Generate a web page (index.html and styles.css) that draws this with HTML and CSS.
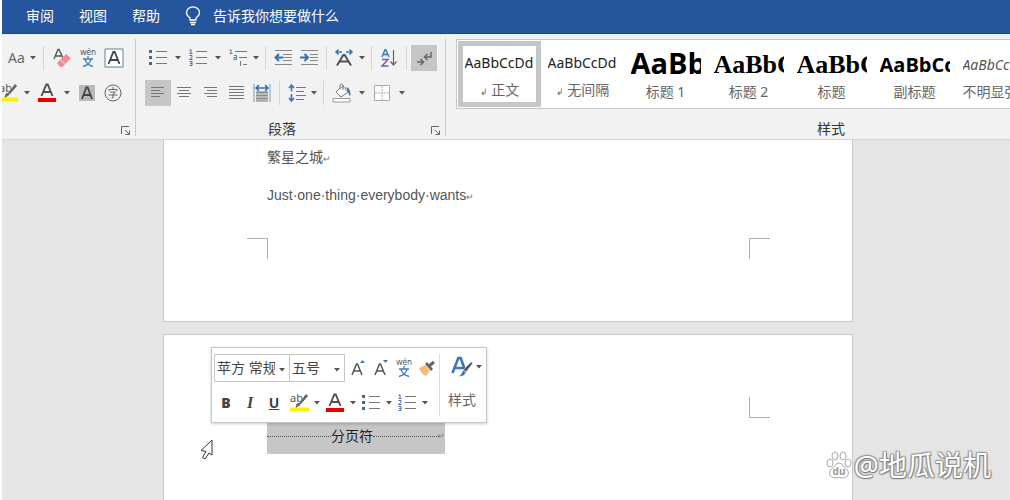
FILE: index.html
```html
<!DOCTYPE html>
<html lang="zh-CN">
<head>
<meta charset="utf-8">
<title>文档</title>
<link rel="stylesheet" href="styles.css">
</head>
<body>
<svg class="defs" aria-hidden="true">
  <symbol id="caret" viewBox="0 0 6 4"><path d="M0 0h6L3 3.5z" fill="#555"/></symbol>
  <symbol id="launch" viewBox="0 0 10 10"><path d="M.5 8V.5H8M4 4l4 4M8.500 4.500v4h-4" fill="none" stroke="#666"/></symbol>
  <symbol id="bullets" viewBox="0 0 18 18"><path d="M7 2.500h11M7 8.500h11M7 14.500h11" stroke="#777"/><path d="M0 1h3v3H0zM0 7h3v3H0zM0 13h3v3H0z" fill="#3f6797"/></symbol>
  <symbol id="numbers" viewBox="0 0 18 18"><path d="M7 2.500h11M7 8.500h11M7 14.500h11" stroke="#777"/><path d="M.5 1.500L2 .5v4M.5 4.500h3M.5 6.500h2.500v2L.5 10.500h3M.5 12.500h2.500v4H.5M1 14.500h2" fill="none" stroke="#4a70a0"/></symbol>
  <symbol id="wen" viewBox="0 0 18 20"><path d="M9 8v2.500M4 11h10M6 11.500c1 3 4 6 8 7M12 11.500c-1 3-4 6-8 7" fill="none" stroke="#3f7fc0" stroke-width="1.300"/></symbol>
  <symbol id="highlight" viewBox="0 0 20 20"><path d="M18.500 3L11 11.500l-4 3 1-3.500 3-1L17 1.500z" fill="#666" stroke="#666"/><path d="M1 14.500h19v4H1z" fill="#fff000"/></symbol>
  <symbol id="fontcolor" viewBox="0 0 20 20"><path d="M4.500 13L9.300 1.500h1.400L15.500 13M6.500 9h7" fill="none" stroke="#505050" stroke-width="1.900"/><path d="M1 15h18v4H1z" fill="#e80000"/></symbol>
</svg>

<div class="app">
  <nav class="tabs">
    <button>审阅</button>
    <button>视图</button>
    <button>帮助</button>
    <label class="tell">
      <svg width="16" height="20" viewBox="0 0 16 20"><path d="M5 14v-2C3 10.500 1.500 9 1.500 6.800a6.500 6 0 0 1 13 0C14.500 9 13 10.500 11 12v2zM5 16.500h6M6 18.500h4" fill="none" stroke="#fff" stroke-width="1.300"/></svg>
      <input type="text" placeholder="告诉我你想要做什么" aria-label="告诉我你想要做什么">
    </label>
  </nav>

  <header class="ribbon">
    <section class="group font-group">
      <div class="row">
        <button class="btn aa">Aa</button>
        <button class="drop small"><svg><use href="#caret"/></svg></button>
        <i class="sep wide"></i>
        <button class="btn"><svg width="20" height="20" viewBox="0 0 20 20"><path d="M2 11L6 1.500h1L11 10M3.500 8h6" fill="none" stroke="#555" stroke-width="1.400"/><path d="M5 15l9-9 5 4-8.500 9H8z" fill="#ef8f99"/><path d="M8.500 11.500l4.500 5" stroke="#fbdde0"/></svg></button>
        <button class="btn"><svg width="18" height="20"><text x="9" y="7" text-anchor="middle" class="pinyin">wén</text><use href="#wen"/></svg></button>
        <button class="btn"><svg width="20" height="20" viewBox="0 0 20 20"><path d="M1 1h18v18H1z" fill="#fff" stroke="#5b8299"/><path d="M4.500 16L9.300 4h1.400l4.800 12M6.500 12h7" fill="none" stroke="#444" stroke-width="1.800"/></svg></button>
      </div>
      <div class="row">
        <button class="btn cut"><svg width="20" height="20"><text x="1" y="9" class="ab">ab</text><use href="#highlight"/></svg></button>
        <button class="drop"><svg><use href="#caret"/></svg></button>
        <button class="btn"><svg width="20" height="20"><use href="#fontcolor"/></svg></button>
        <button class="drop"><svg><use href="#caret"/></svg></button>
        <button class="btn"><svg width="16" height="16" viewBox="0 0 16 16"><path d="M0 0h16v16H0z" fill="#b9b9b9"/><path d="M3 14L7.300 2.500h1.400L13 14M5 10h6" fill="none" stroke="#444" stroke-width="1.800"/></svg></button>
        <button class="btn"><svg width="18" height="18" viewBox="0 0 18 18"><circle cx="9" cy="9" r="8" fill="none" stroke="#666"/><path d="M9 3v2M5 7V5.500h8V7M6 8h5.500L9 10v4H7.500M4.500 11h9" fill="none" stroke="#666"/></svg></button>
      </div>
      <footer><span></span><button class="launcher"><svg><use href="#launch"/></svg></button></footer>
    </section>

    <section class="group para-group">
      <div class="row">
        <button class="btn"><svg width="18" height="18"><use href="#bullets"/></svg></button>
        <button class="drop"><svg><use href="#caret"/></svg></button>
        <button class="btn"><svg width="18" height="18"><use href="#numbers"/></svg></button>
        <button class="drop"><svg><use href="#caret"/></svg></button>
        <button class="btn"><svg width="18" height="18" viewBox="0 0 18 18"><path d="M6 2.500h12M10 8.500h8M14 15.500h4" stroke="#777"/><path d="M.5 1.500L2 .5v4M.5 4.500h3M5 6.500h2.500v4H5v-2h2M11.500 12v5M11 13.500h1" fill="none" stroke="#4a80b8"/></svg></button>
        <button class="drop small"><svg><use href="#caret"/></svg></button>
        <i class="sep"></i>
        <button class="btn"><svg width="18" height="18" viewBox="0 0 18 18"><path d="M1 1.500h17M9 5.500h9M9 8.500h9M9 11.500h9M1 15.500h17" stroke="#888"/><path d="M9 8.500H2M5 5L1.500 8.500 5 12" fill="none" stroke="#2f73b5" stroke-width="2"/></svg></button>
        <button class="btn"><svg width="18" height="18" viewBox="0 0 18 18"><path d="M1 1.500h17M10 5.500h8M10 8.500h8M10 11.500h8M1 15.500h17" stroke="#888"/><path d="M0 8.500h7M4.500 5L8 8.500 4.500 12" fill="none" stroke="#2f73b5" stroke-width="2"/></svg></button>
        <i class="sep"></i>
        <button class="btn"><svg width="20" height="18" viewBox="0 0 20 18"><path d="M3 16.500L9.300 6h1.400L17 16.500M6 12.500h8" fill="none" stroke="#555" stroke-width="2"/><path d="M8 3H2M4.500.5L2 3l2.500 2.500M12 3h6M15.500.5L18 3l-2.500 2.500" fill="none" stroke="#3978b8" stroke-width="1.500"/></svg></button>
        <button class="drop small"><svg><use href="#caret"/></svg></button>
        <i class="sep"></i>
        <button class="btn"><svg width="18" height="18" viewBox="0 0 18 18"><path d="M2 8L5 .8h.8L9 8M3 5.500h5" fill="none" stroke="#3978b8" stroke-width="1.400"/><path d="M2 10.500h6L2 17h6.500" fill="none" stroke="#8753a5" stroke-width="1.400"/><path d="M13.500 1v15M10.500 12.500l3 3.500 3-3.500" fill="none" stroke="#666" stroke-width="1.200"/></svg></button>
        <i class="sep"></i>
        <button class="btn on"><svg width="18" height="18" viewBox="0 0 18 18"><path d="M16 3v5h-6M12.500 5L9.500 8l3 3M2 13h6M5.500 10l3 3-3 3" fill="none" stroke="#666" stroke-width="1.500"/></svg></button>
      </div>
      <div class="row">
        <button class="btn on"><svg width="16" height="16" viewBox="0 0 16 16"><path d="M1 2.500h13M1 5.500h9M1 8.500h13M1 11.500h9" stroke="#777"/></svg></button>
        <button class="btn"><svg width="16" height="16" viewBox="0 0 16 16"><path d="M1 2.500h14M3 5.500h10M1 8.500h14M3 11.500h10" stroke="#777"/></svg></button>
        <button class="btn"><svg width="16" height="16" viewBox="0 0 16 16"><path d="M2 2.500h13M5 5.500h10M2 8.500h13M5 11.500h10" stroke="#777"/></svg></button>
        <button class="btn"><svg width="16" height="16" viewBox="0 0 16 16"><path d="M1 1.500h15M1 4.500h15M1 7.500h15M1 10.500h15M1 13.500h15" stroke="#777"/></svg></button>
        <button class="btn"><svg width="18" height="18" viewBox="0 0 18 18"><path d="M1 0v18M17 0v18" stroke="#6f9cc6"/><path d="M3 7h12v10H3z" fill="#bbb"/><path d="M3 8.500h12M3 11.500h12M3 14.500h12M3 17h12" stroke="#888"/><path d="M3 4h12M6 1L3 4l3 3M12 1l3 3-3 3" fill="none" stroke="#2f6ead" stroke-width="1.500"/></svg></button>
        <i class="sep"></i>
        <button class="btn"><svg width="18" height="18" viewBox="0 0 18 18"><path d="M8 3.500h10M8 7.500h8M8 11.500h10M8 15.500h8" stroke="#777"/><path d="M3.500 1v6.500M1 4l2.500-3L6 4M3.500 10v7M1 14l2.500 3L6 14" fill="none" stroke="#3978b8" stroke-width="1.600"/></svg></button>
        <button class="drop tiny"><svg><use href="#caret"/></svg></button>
        <i class="sep wide"></i>
        <button class="btn"><svg width="20" height="20" viewBox="0 0 20 20"><path d="M1 15.500h17v3.500H1z" fill="#fff" stroke="#999"/><path d="M4 9l7-6 5 6-7 5zM8 6V2q1.500-2 3 0v5" fill="#fff" stroke="#777"/><path d="M14 4q5 1 4.500 9-2-1-2.500-4z" fill="#3978a8"/></svg></button>
        <button class="drop"><svg><use href="#caret"/></svg></button>
        <button class="btn"><svg width="18" height="18" viewBox="0 0 18 18"><path d="M1.500 1.500h15v15h-15z" fill="#fff" stroke="#aaa"/><path d="M9 2v14M2 9h14" stroke="#aaa" stroke-dasharray="2 1"/></svg></button>
        <button class="drop"><svg><use href="#caret"/></svg></button>
      </div>
      <footer><span>段落</span><button class="launcher"><svg><use href="#launch"/></svg></button></footer>
    </section>

    <section class="group style-group">
      <div class="gallery">
        <button class="style chosen"><span class="sample">AaBbCcDd</span><span class="name"><small>↲</small> 正文</span></button>
        <button class="style"><span class="sample">AaBbCcDd</span><span class="name"><small>↲</small> 无间隔</span></button>
        <button class="style"><span class="sample h1">AaBb</span><span class="name">标题 1</span></button>
        <button class="style"><span class="sample serif">AaBbC</span><span class="name">标题 2</span></button>
        <button class="style"><span class="sample serif">AaBbC</span><span class="name">标题</span></button>
        <button class="style"><span class="sample sub">AaBbCc</span><span class="name">副标题</span></button>
        <button class="style"><span class="sample faint">AaBbCcDd</span><span class="name">不明显强调</span></button>
      </div>
      <footer><span>样式</span></footer>
    </section>
  </header>

  <main class="canvas">
    <article class="sheet first">
      <div class="body">
        <p>繁星之城<small>↵</small></p>
        <p class="latin">Just·one·thing·everybody·wants<small>↵</small></p>
      </div>
      <div class="corners bottom"><i></i><i></i></div>
    </article>

    <article class="sheet second">
      <div class="corners top"><i></i><i></i></div>
      <div class="body">
        <p class="break"><i></i><span>分页符</span><i></i><small>↵</small></p>
      </div>

      <div class="mini">
        <div class="mini-tools">
          <div class="row">
            <span class="combo family"><select aria-label="字体"><option>苹方 常规</option></select><svg><use href="#caret"/></svg></span>
            <span class="combo size"><select aria-label="字号"><option>五号</option></select><svg><use href="#caret"/></svg></span>
            <button class="btn slim"><svg width="16" height="18" viewBox="0 0 16 18"><path d="M2 16L6.500 5h1L12 16M4 12h6" fill="none" stroke="#555" stroke-width="1.500"/><path d="M10 4l2.500-3L15 4z" fill="#3978b8"/></svg></button>
            <button class="btn slim"><svg width="16" height="18" viewBox="0 0 16 18"><path d="M2 16L6.500 5h1L12 16M4 12h6" fill="none" stroke="#555" stroke-width="1.500"/><path d="M10 1l2.500 3L15 1z" fill="#3978b8"/></svg></button>
            <button class="btn slim"><svg width="18" height="20"><text x="9" y="7" text-anchor="middle" class="pinyin">wén</text><use href="#wen"/></svg></button>
            <button class="btn slim"><svg width="18" height="18" viewBox="0 0 18 18"><path d="M1 9l6-3 5 6-4 5q-5-2-7-8z" fill="#f0bd7c"/><path d="M7 5l2-2 6 7-2 2z" fill="#666"/><path d="M11 7l5-4" stroke="#666" stroke-width="3"/></svg></button>
          </div>
          <div class="row">
            <button class="btn mark"><b>B</b></button>
            <button class="btn mark italic">I</button>
            <button class="btn mark"><u>U</u></button>
            <button class="btn"><svg width="20" height="20"><text x="1" y="9" class="ab">ab</text><use href="#highlight"/></svg></button>
            <button class="drop small"><svg><use href="#caret"/></svg></button>
            <button class="btn"><svg width="20" height="20"><use href="#fontcolor"/></svg></button>
            <button class="drop small"><svg><use href="#caret"/></svg></button>
            <button class="btn"><svg width="18" height="18"><use href="#bullets"/></svg></button>
            <button class="drop small"><svg><use href="#caret"/></svg></button>
            <button class="btn"><svg width="18" height="18"><use href="#numbers"/></svg></button>
            <button class="drop small"><svg><use href="#caret"/></svg></button>
          </div>
        </div>
        <button class="mini-style">
          <span><svg width="24" height="22" viewBox="0 0 24 22"><path d="M2.500 17L8.300 2h2.400l5 14M5 12h9" fill="none" stroke="#3978b8" stroke-width="2.600"/><path d="M23 7l-7 9-3-2 8-8z" fill="#555" stroke="#fff" stroke-width=".5"/><path d="M13 14l3 2q-1 5-8 4.500 3-1 5-6.500z" fill="#3978b8" stroke="#fff" stroke-width=".6"/></svg><svg class="caret"><use href="#caret"/></svg></span>
          <span>样式</span>
        </button>
      </div>

      <svg class="pointer" width="14" height="22" viewBox="0 0 14 22"><path d="M12 1v15l-3-2-4 6-2.500-1.500L6 12.500 1 11.500z" fill="#fff" stroke="#333"/></svg>
    </article>

    <div class="watermark">
      <svg width="26" height="28" viewBox="0 0 26 28"><g fill="#fff" stroke="#aaa"><ellipse cx="4" cy="12" rx="3" ry="4"/><ellipse cx="9" cy="5" rx="3" ry="4"/><ellipse cx="17" cy="5" rx="3" ry="4"/><ellipse cx="22" cy="12" rx="3" ry="4"/><path d="M13 12q3 0 5 4 6 4 4 8-2 4-9 2.500Q6 28 4 24t4-8q2-4 5-4z"/></g><text x="13" y="24" text-anchor="middle" class="du">du</text></svg>
      <span>@地瓜说机</span>
    </div>
  </main>
</div>
</body>
</html>
```
FILE: styles.css
```css
* { box-sizing: border-box; }

body {
  margin: 0;
  background: #fff;
  color: #444;
  font: 14px/20px "Noto Sans", "Noto Sans CJK SC", sans-serif;
}

button, input, select {
  margin: 0;
  padding: 0;
  border: 0;
  background: none;
  color: inherit;
  font: inherit;
}

svg { display: block; flex: none; }
p { margin: 0; }
.defs { position: absolute; width: 0; height: 0; }

.app {
  display: flex;
  flex-direction: column;
  height: 100vh;
  margin-left: 2px;
  overflow: hidden;
}

/* Tab strip */
.tabs {
  display: flex;
  align-items: center;
  gap: 25px;
  height: 34px;
  padding: 0 24px 2px;
  background: #24559d;
  border-bottom: 1px solid #1d4680;
  color: #fff;
}
.tell { display: flex; align-items: center; flex: 1; gap: 12px; }
.tell input { flex: 1; }
.tell input::placeholder { color: #fff; opacity: 1; }

/* Ribbon */
.ribbon {
  display: flex;
  height: 106px;
  padding-top: 4px;
  background: #f2f2f2;
  border-top: 1px solid #e4f3fa;
  border-bottom: 1px solid #d4d4d4;
}
.group { display: flex; flex-direction: column; flex: none; }
.font-group, .para-group {
  gap: 9px;
  padding-top: 6px;
  margin-bottom: 3px;
  border-right: 1px solid #c9c9c9;
}
.font-group { width: 134px; }
.para-group { width: 310px; padding-left: 9px; }
.style-group { flex: 1; min-width: 0; padding-left: 10px; }

.row { display: flex; align-items: center; height: 26px; }
.btn {
  display: flex;
  align-items: center;
  justify-content: center;
  flex: none;
  width: 26px;
  height: 26px;
}
.on { background: #c6c6c6; }
.aa { padding-left: 3px; color: #666; }
.cut { width: 18px; justify-content: flex-end; padding-right: 2px; overflow: hidden; }
.slim { width: 23px; }
.drop { display: flex; align-items: center; justify-content: center; flex: none; width: 14px; height: 26px; }
.drop.small { width: 10px; }
.drop.tiny { width: 8px; }
.drop svg, .combo svg, .caret { width: 6px; height: 4px; }
.sep { flex: none; width: 9px; height: 24px; background: linear-gradient(#d6d6d6, #d6d6d6) center / 1px 100% no-repeat; }
.sep.wide { width: 11px; }

.pinyin { font: 8px "Noto Sans", sans-serif; fill: #555; }
.ab { font: 11px "Noto Sans", sans-serif; fill: #555; }

footer { display: flex; align-items: center; height: 20px; margin-top: auto; color: #333; }
.group footer span { flex: 1; text-align: center; }
.launcher { padding: 4px 4px 0 0; }
.font-group footer, .para-group footer { margin-bottom: -3px; }
.para-group footer { margin-left: -12px; }
.launcher svg { width: 10px; height: 10px; }

/* Style gallery */
.gallery {
  display: flex;
  height: 70px;
  padding: 1px;
  overflow: hidden;
  background: #fff;
  border: 1px solid #c6c6c6;
  border-right: 0;
}
.style {
  display: flex;
  flex-direction: column;
  align-items: center;
  justify-content: flex-end;
  flex: none;
  width: 83px;
  padding-bottom: 5px;
  color: #666;
}
.chosen { padding-bottom: 0; border: 5px solid #c6c6c6; }
.sample {
  width: 70px;
  overflow: hidden;
  color: #222;
  font-size: 14px;
  line-height: 34px;
  text-align: left;
  white-space: nowrap;
}
.name { white-space: nowrap; }
.name small { font-size: 9px; }
.h1 { font: bold 29px/38px "Open Sans", sans-serif; color: #000; }
.serif { font: bold 26px/34px "Liberation Serif", serif; color: #000; }
.sub { font: bold 20px/34px "Open Sans", sans-serif; color: #000; }
.faint { font-style: italic; color: #555; }
.style-group footer { padding-left: 196px; }

/* Document */
.canvas {
  position: relative;
  display: flex;
  flex-direction: column;
  flex: 1;
  gap: 12px;
  min-height: 0;
  padding: 0 157px 0 161px;
  overflow: hidden;
  background: #e5e5e5;
}
.sheet { position: relative; background: #fff; border: 1px solid #c9c9c9; }
.first { flex: none; padding: 2px 0 62px; border-top: 0; }
.second { flex: 1; padding-top: 62px; border-bottom: 0; }
.body { padding: 0 103px; }
.first p { padding: 5px 0; margin-bottom: 6px; color: #555; }
.body small { color: #777; font-size: 9px; }
.first .latin { font-family: "Liberation Sans", sans-serif; }
.corners { display: flex; justify-content: space-between; padding: 0 82px 0 83px; }
.corners i { width: 21px; height: 21px; border: 0 solid #b0b0b0; }
.bottom { padding-top: 20px; }
.bottom i { border-top-width: 1px; }
.top i { border-bottom-width: 1px; }
.corners i:first-child { border-right-width: 1px; }
.corners i:last-child { border-left-width: 1px; }
.break {
  display: flex;
  align-items: center;
  width: 178px;
  height: 36px;
  background: #c6c6c6;
  color: #222;
}
.break i { flex: 1; border-top: 1px dotted #555; }

/* Floating format bar */
.mini {
  position: absolute;
  left: 47px;
  top: 12px;
  display: flex;
  padding: 6px 2px;
  background: #fff;
  border: 1px solid #c6c6c6;
  box-shadow: 0 1px 3px rgba(0, 0, 0, .2);
}
.mini-tools { display: flex; flex-direction: column; gap: 8px; padding-right: 1px; border-right: 1px solid #ddd; }
.mini-tools .row:first-child { height: 28px; }
.combo { position: relative; display: flex; height: 28px; border: 1px solid #c6c6c6; }
.combo select { width: 100%; padding: 0 14px 0 2px; appearance: none; overflow: hidden; }
.combo svg { position: absolute; right: 4px; top: 13px; }
.family { width: 76px; }
.size { width: 56px; margin: 0 1px 0 -1px; }
.mark { width: 24px; font-weight: bold; }
.italic { font-family: "Liberation Serif", serif; font-style: italic; font-size: 16px; }
.mini-style { display: flex; flex-direction: column; align-items: center; gap: 12px; width: 44px; padding-top: 2px; color: #666; }
.mini-style span:first-child { display: flex; align-items: center; gap: 2px; padding-left: 8px; }

.pointer { position: absolute; left: 36px; top: 104px; }

.watermark {
  position: absolute;
  right: 19px;
  bottom: 17px;
  display: flex;
  align-items: center;
  gap: 2px;
  color: #fff;
  font-size: 28px;
  line-height: 36px;
  text-shadow: 1px 1px 1px #777, -1px -1px 1px #999, 1px -1px 1px #999, -1px 1px 1px #999;
}
.du { font: bold 10px "Noto Sans", sans-serif; fill: #999; text-shadow: none; }
```
